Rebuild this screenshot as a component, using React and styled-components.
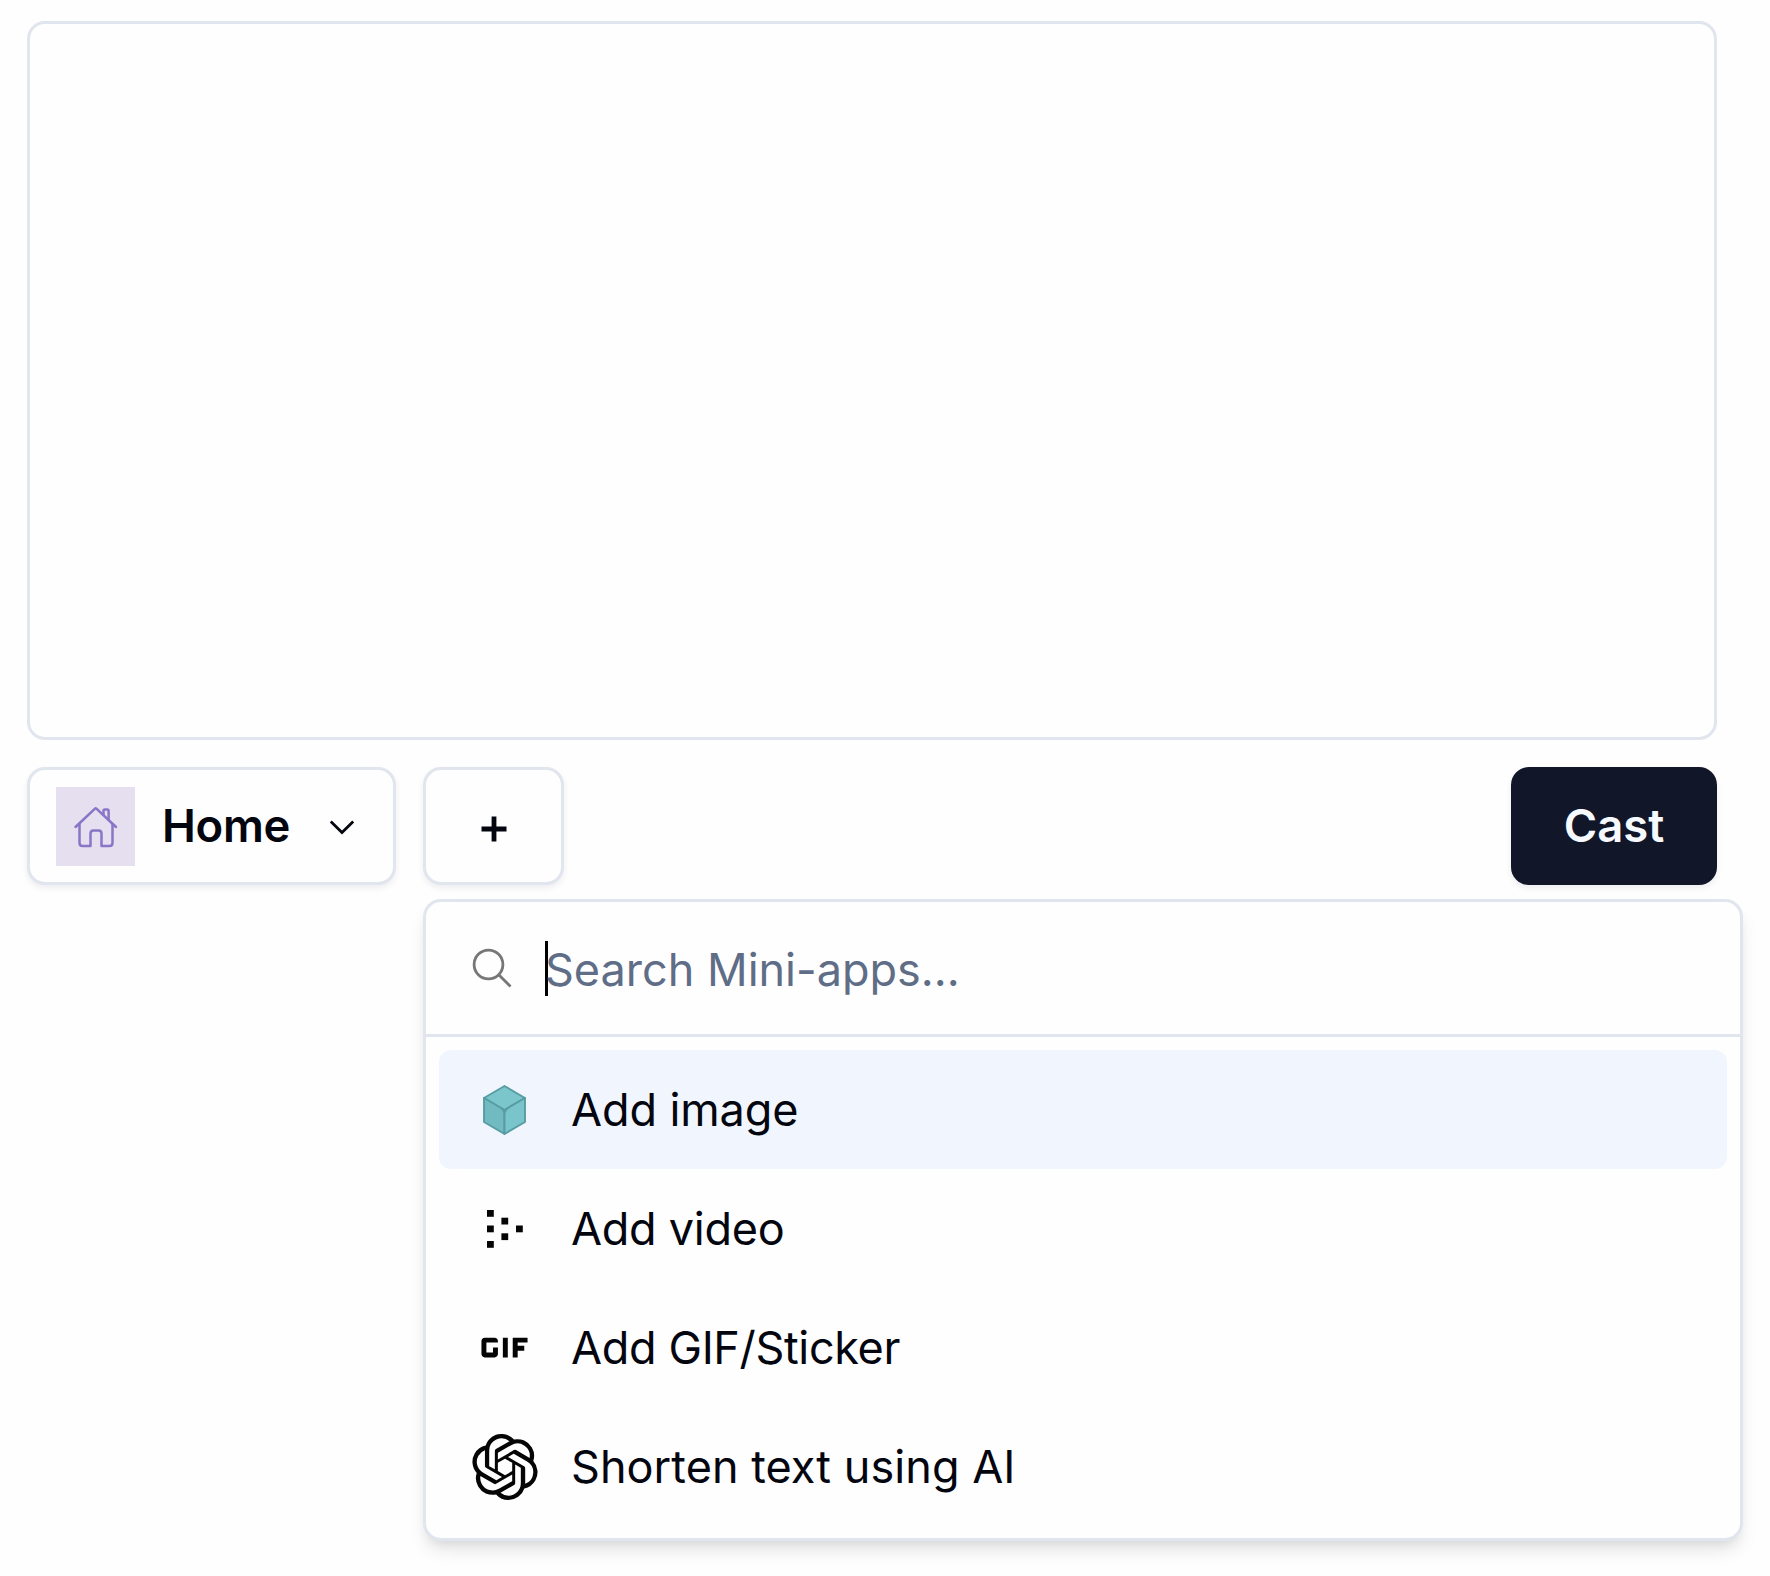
import React from "react";
import styled, { createGlobalStyle } from "styled-components";
import { MdGif } from "react-icons/md";
import { SiOpenai } from "react-icons/si";

const line = "#e1e5ee";

const GlobalStyle = createGlobalStyle`
  *, *::before, *::after { box-sizing: border-box; }
  body {
    margin: 0;
    background: #fefefe;
    color: #03050f;
    font-family: Inter, "Liberation Sans", sans-serif;
  }
`;

const Page = styled.main`
  width: 1770px;
  height: 1576px;
  padding: 21px 53px 0 27px;
  display: flex;
  flex-direction: column;
  gap: 27px;
  overflow: hidden;
`;

const Editor = styled.div`
  height: 719px;
  flex: none;
  border: 3px solid ${line};
  border-radius: 18px;
`;

const Toolbar = styled.div`
  display: flex;
  align-items: flex-start;
  gap: 27px;
`;

const Button = styled.button`
  width: ${(p) => p.$width}px;
  height: 118px;
  padding: ${(p) => p.$padding || "0"};
  display: flex;
  align-items: center;
  justify-content: ${(p) => (p.$start ? "flex-start" : "center")};
  border: 3px solid ${(p) => (p.$primary ? "#111729" : line)};
  border-radius: 18px;
  background: ${(p) => (p.$primary ? "#111729" : "#fefefe")};
  color: ${(p) => (p.$primary ? "#f6f9fd" : "inherit")};
  box-shadow: 0 3px 6px rgba(15, 20, 50, 0.07);
  font: 600 45.4px/1 Inter, "Liberation Sans", sans-serif;
`;

const Label = styled.span`
  display: block;
  white-space: nowrap;
  line-height: 60px;
  letter-spacing: ${(p) => p.$spacing || 0}px;
`;

const Avatar = styled.span`
  width: 79px;
  height: 79px;
  margin-right: 27px;
  flex: none;
  background: #e5dff0;
`;

const Icon = styled.svg`
  display: block;
  flex: none;
  overflow: visible;
`;

const Chevron = styled(Icon)`
  margin-left: auto;
`;

const MenuAnchor = styled.div`
  position: relative;
`;

const Spacer = styled.div`
  flex: 1;
`;

const Menu = styled.div`
  position: absolute;
  top: 132px;
  left: 0;
  width: 1320px;
  height: 642px;
  border: 3px solid ${line};
  border-radius: 18px;
  background: #fefefe;
  box-shadow: 0 12px 18px -3px rgba(0, 0, 0, 0.1), 0 6px 12px -6px rgba(0, 0, 0, 0.1);
`;

const SearchRow = styled.div`
  height: 135px;
  padding-left: 46px;
  display: flex;
  align-items: center;
  border-bottom: 3px solid ${line};
`;

const Caret = styled.span`
  width: 3px;
  height: 55px;
  margin-left: 33px;
  background: #000;
`;

const Placeholder = styled(Label)`
  margin-left: -3px;
  padding-top: 3px;
  font-size: 45px;
  color: #5f6d87;
`;

const List = styled.div`
  padding: 13px;
`;

const Item = styled.div`
  height: 119px;
  padding-left: 26px;
  display: flex;
  align-items: center;
  gap: 27px;
  border-radius: 12px;
  background: ${(p) => (p.$active ? "#f1f5fd" : "transparent")};
  font-size: 45px;
`;

const IconSlot = styled.span`
  width: 79px;
  height: 79px;
  display: flex;
  align-items: center;
  justify-content: center;
  flex: none;
`;

const House = () => (
  <Icon width="79" height="79" viewBox="0 0 79 79" fill="none" stroke="#8a75c6" strokeWidth="2.5" strokeLinecap="round" strokeLinejoin="round">
    <path d="M19.5 40 39 21.6Q39.7 21 40.4 21.6L60 40" />
    <path d="M47.5 27.5V23.8Q47.5 22.5 48.8 22.5H51.3Q52.6 22.5 52.6 23.8V32.5" />
    <path d="M23.5 37V56Q23.5 59 26.5 59H34.5V46.5Q34.5 43.5 37.5 43.5H42.5Q45.5 43.5 45.5 46.5V59H53.5Q56.5 59 56.5 56V37" />
  </Icon>
);

const Cube = () => (
  <Icon width="43" height="50" viewBox="0 0 43 50" stroke="#579da3" strokeWidth="1.9" strokeLinejoin="round">
    <path d="M21.5 1 42 13 21.5 25 1 13Z" fill="#7ac6cb" />
    <path d="M1 13 21.5 25V49L1 37Z" fill="#72bac1" />
    <path d="M42 13 21.5 25V49L42 37Z" fill="#7ac4cb" />
    <path d="M17.5 22.7 21.5 29.5 25.5 22.7 21.5 25Z" fill="#579da3" stroke="none" />
  </Icon>
);

const dots = [[0, 0], [0, 15.5], [0, 31], [14.4, 7.7], [14.4, 23.3], [29, 15.5]];

const Dots = () => (
  <Icon width="36" height="38" viewBox="0 0 36 38" fill="#050505">
    {dots.map(([x, y]) => (
      <rect key={`${x}-${y}`} x={x} y={y} width="6.8" height="6.8" />
    ))}
  </Icon>
);

const items = [
  { label: "Add image", icon: <Cube />, spacing: -0.1, active: true },
  { label: "Add video", icon: <Dots />, spacing: -0.25 },
  { label: "Add GIF/Sticker", icon: <MdGif size={79} color="#050505" />, spacing: -0.35 },
  { label: "Shorten text using AI", icon: <SiOpenai size={66} color="#050505" />, spacing: 0.05 },
];

export default function App() {
  return (
    <>
      <GlobalStyle />
      <Page>
        <Editor />
        <Toolbar>
          <Button $width={369} $start $padding="0 38px 0 26px">
            <Avatar>
              <House />
            </Avatar>
            <Label $spacing={-0.3}>Home</Label>
            <Chevron width="26" height="16" viewBox="0 0 26 16" fill="none" stroke="#05060f" strokeWidth="2.8">
              <path d="M1.8 3.5 13 14.5 24.2 3.5" />
            </Chevron>
          </Button>
          <MenuAnchor>
            <Button $width={141} $padding="6px 0 0">
              <Icon width="26" height="26" viewBox="0 0 26 26" stroke="#03050f" strokeWidth="4.8">
                <path d="M13 .5V25.5M.5 13H25.5" />
              </Icon>
            </Button>
            <Menu>
              <SearchRow>
                <Icon width="40" height="40" viewBox="0 0 40 40" fill="none" stroke="#777" strokeWidth="2.8">
                  <circle cx="16.5" cy="16.5" r="14.4" />
                  <path d="M26.5 26.5 38.5 38.5" />
                </Icon>
                <Caret />
                <Placeholder>Search Mini-apps...</Placeholder>
              </SearchRow>
              <List>
                {items.map(({ label, icon, spacing, active }) => (
                  <Item key={label} $active={active}>
                    <IconSlot>{icon}</IconSlot>
                    <Label $spacing={spacing}>{label}</Label>
                  </Item>
                ))}
              </List>
            </Menu>
          </MenuAnchor>
          <Spacer />
          <Button $width={206} $primary>
            <Label>Cast</Label>
          </Button>
        </Toolbar>
      </Page>
    </>
  );
}
